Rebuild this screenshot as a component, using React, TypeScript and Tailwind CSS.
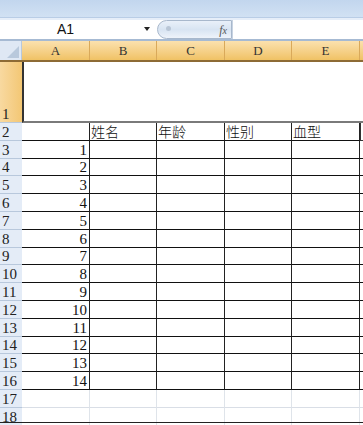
import React from 'react';

const cols = ['A', 'B', 'C', 'D', 'E', ''];
const widths = ['w-[68px]', 'w-[67px]', 'w-[68px]', 'w-[67px]', 'w-[68px]', 'w-[68px]'];
const headers = ['', '姓名', '年龄', '性别', '血型', ''];

const serif = { fontFamily: '"Liberation Serif", "Noto Sans CJK SC", serif' };
const cjk = { fontFamily: '"Noto Sans CJK SC", sans-serif' };

function RowHead({ n, selected, h }: { n: number; selected?: boolean; h: string }) {
  return (
    <div
      className={`w-[22px] shrink-0 ${h} flex items-end pl-[2px] text-[15px] leading-[15px] text-[#222] border-b border-[#b8c8dc] ${
        selected ? 'bg-gradient-to-r from-[#f8d9a0] to-[#f3c774]' : 'bg-[#e4ecf7]'
      }`}
      style={serif}
    >
      {n}
    </div>
  );
}

export default function App() {
  const dataRows = Array.from({ length: 14 }, (_, i) => i + 1);

  return (
    <div className="w-[363px] h-[425px] overflow-hidden bg-white relative">
      {/* ribbon edge */}
      <div className="h-[17px] bg-gradient-to-b from-[#c2d6ee] to-[#d1e1f3]" />
      <div className="h-[3px] bg-[#e6eef9] border-t border-[#b9cde6]" />

      {/* formula bar */}
      <div className="h-[21px] flex items-stretch bg-white border-b-2 border-[#a6bad3]">
        <div className="w-[157px] shrink-0 flex items-center relative">
          <span className="ml-[57px] text-[14px] text-[#111]" style={{ fontFamily: '"Liberation Sans", sans-serif' }}>
            A1
          </span>
          <span className="absolute left-[144px] top-[7px] w-0 h-0 border-l-[3px] border-r-[3px] border-t-[4px] border-l-transparent border-r-transparent border-t-[#222]" />
        </div>
        <div className="w-[75px] shrink-0 rounded-l-full border border-[#a8b8cc] bg-gradient-to-b from-[#e9f0f9] via-[#d8e4f2] to-[#eef3fa] flex items-center justify-end pr-[4px] relative">
          <span className="absolute left-[8px] top-[5px] w-[5px] h-[5px] rounded-full bg-[#b9c6d6]" />
          <span className="italic text-[12px] text-[#555]" style={serif}>
            f<span className="text-[10px]">x</span>
          </span>
        </div>
        <div className="flex-1 border-l border-[#c7d3e2]" />
      </div>

      {/* column headers */}
      <div className="flex h-[21px] border-b-2 border-[#8d6b35]">
        <div className="w-[22px] shrink-0 bg-[#dfe8f4] relative border-r border-[#b8c8dc]">
          <span
            className="absolute right-[2px] bottom-[2px] w-0 h-0"
            style={{ borderBottom: '12px solid #b9c9dc', borderLeft: '12px solid transparent' }}
          />
        </div>
        {cols.map((c, i) => (
          <div
            key={i}
            className={`${widths[i]} shrink-0 flex items-center justify-center text-[13px] text-[#333] bg-gradient-to-b from-[#fbe1ae] to-[#f0c264] border-r border-[#d9a95a]`}
            style={serif}
          >
            {c}
          </div>
        ))}
      </div>

      {/* row 1 */}
      <div className="flex h-[61px]">
        <RowHead n={1} selected h="h-[61px]" />
        <div className="flex-1 border-l-2 border-[#333] border-b-2 border-b-[#7a7a7a]" />
      </div>

      {/* row 2 header row */}
      <div className="flex h-[17.8px]">
        <RowHead n={2} h="h-[17.8px]" />
        {headers.map((t, i) => (
          <div
            key={i}
            className={`${widths[i]} shrink-0 border-b border-[#111] ${i < 5 ? 'border-r border-r-[#222]' : 'border-l border-[#333]'} text-[14px] leading-[17px] pl-[1px] text-[#111] font-light`}
            style={cjk}
          >
            {t}
          </div>
        ))}
      </div>

      {/* data rows */}
      {dataRows.map((n) => (
        <div key={n} className="flex h-[17.8px]">
          <RowHead n={n + 2} h="h-[17.8px]" />
          {cols.map((c, i) => (
            <div
              key={i}
              className={`${widths[i]} shrink-0 border-b border-[#111] ${i < 5 ? 'border-r border-r-[#222]' : ''} flex items-end justify-end text-[15px] leading-[15px] pr-[2px] text-[#111]`}
              style={serif}
            >
              {i === 0 ? n : ''}
            </div>
          ))}
        </div>
      ))}

      {/* empty rows */}
      {[17, 18].map((n) => (
        <div key={n} className="flex h-[17.8px]">
          <RowHead n={n} h="h-[17.8px]" />
          {cols.map((c, i) => (
            <div key={i} className={`${widths[i]} shrink-0 border-b border-[#d9dee6] border-r border-r-[#dfe4ea]`} />
          ))}
        </div>
      ))}
      <div className="absolute left-0 right-0 bottom-[2px] h-[1px] bg-[#222]" />
    </div>
  );
}
